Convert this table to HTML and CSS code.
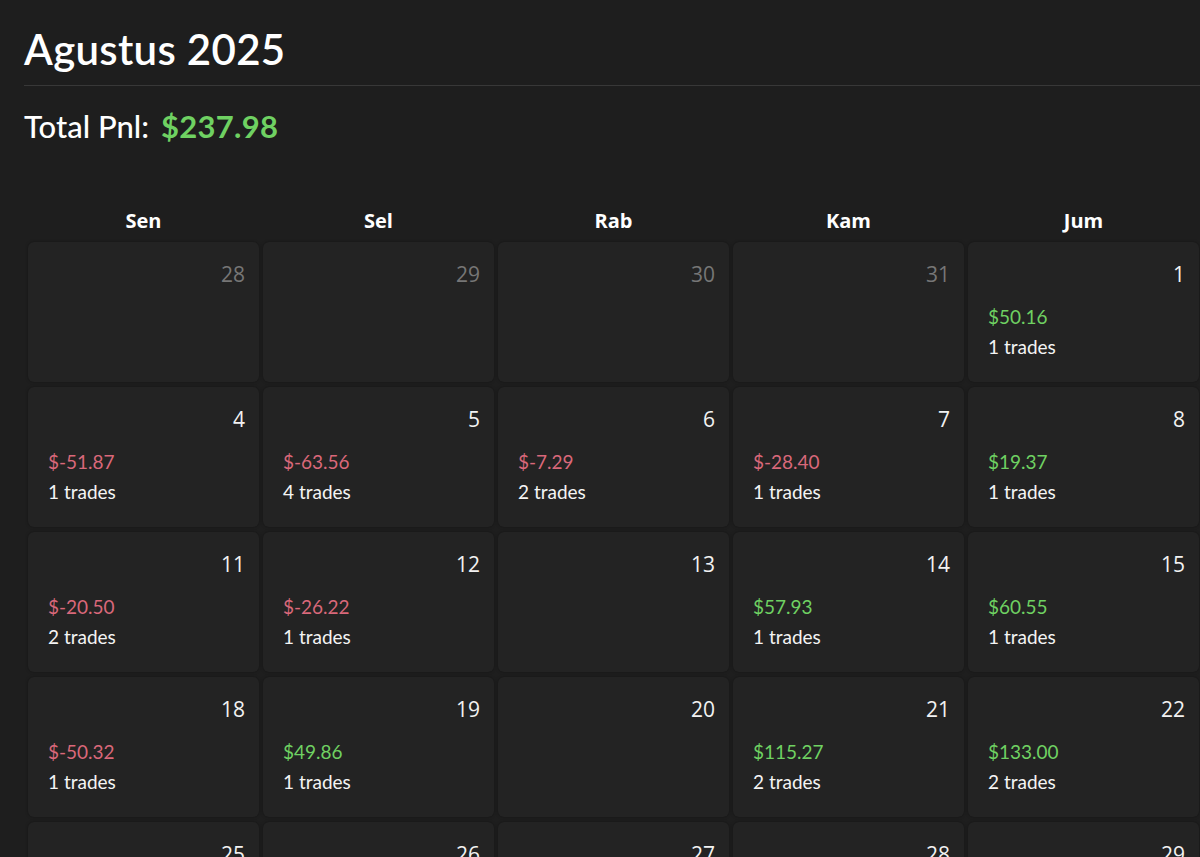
FILE: index.html
```html
<!DOCTYPE html>
<html lang="id">
<head>
<meta charset="utf-8">
<title>Agustus 2025</title>
<link rel="stylesheet" href="styles.css">
</head>
<body>
<div class="page">
  <h1 class="title">Agustus 2025</h1>
  <div class="total"><span class="label">Total Pnl:</span><span class="pos">$237.98</span></div>
  <div class="calendar">
    <div class="dow">Sen</div><div class="dow">Sel</div><div class="dow">Rab</div><div class="dow">Kam</div><div class="dow">Jum</div>

    <div class="cell muted"><div class="num">28</div></div>
    <div class="cell muted"><div class="num">29</div></div>
    <div class="cell muted"><div class="num">30</div></div>
    <div class="cell muted"><div class="num">31</div></div>
    <div class="cell"><div class="num">1</div><div class="pnl pos">$50.16</div><div class="trades">1 trades</div></div>

    <div class="cell"><div class="num">4</div><div class="pnl neg">$-51.87</div><div class="trades">1 trades</div></div>
    <div class="cell"><div class="num">5</div><div class="pnl neg">$-63.56</div><div class="trades">4 trades</div></div>
    <div class="cell"><div class="num">6</div><div class="pnl neg">$-7.29</div><div class="trades">2 trades</div></div>
    <div class="cell"><div class="num">7</div><div class="pnl neg">$-28.40</div><div class="trades">1 trades</div></div>
    <div class="cell"><div class="num">8</div><div class="pnl pos">$19.37</div><div class="trades">1 trades</div></div>

    <div class="cell"><div class="num">11</div><div class="pnl neg">$-20.50</div><div class="trades">2 trades</div></div>
    <div class="cell"><div class="num">12</div><div class="pnl neg">$-26.22</div><div class="trades">1 trades</div></div>
    <div class="cell"><div class="num">13</div></div>
    <div class="cell"><div class="num">14</div><div class="pnl pos">$57.93</div><div class="trades">1 trades</div></div>
    <div class="cell"><div class="num">15</div><div class="pnl pos">$60.55</div><div class="trades">1 trades</div></div>

    <div class="cell"><div class="num">18</div><div class="pnl neg">$-50.32</div><div class="trades">1 trades</div></div>
    <div class="cell"><div class="num">19</div><div class="pnl pos">$49.86</div><div class="trades">1 trades</div></div>
    <div class="cell"><div class="num">20</div></div>
    <div class="cell"><div class="num">21</div><div class="pnl pos">$115.27</div><div class="trades">2 trades</div></div>
    <div class="cell"><div class="num">22</div><div class="pnl pos">$133.00</div><div class="trades">2 trades</div></div>

    <div class="cell"><div class="num">25</div></div>
    <div class="cell"><div class="num">26</div></div>
    <div class="cell"><div class="num">27</div></div>
    <div class="cell"><div class="num">28</div></div>
    <div class="cell"><div class="num">29</div></div>
  </div>
</div>
</body>
</html>
```

FILE: styles.css
```css
html, body {
  margin: 0;
  padding: 0;
  background: #1e1e1e;
  overflow: hidden;
  height: 857px;
}
body {
  color: #ffffff;
  font-family: "Lato", "Noto Sans", sans-serif;
}
.page {
  padding: 23px 0 0 24px;
}
.title {
  margin: 0;
  font-size: 42px;
  font-weight: 600;
  line-height: 52px;
  padding-bottom: 10px;
  border-bottom: 1px solid #383838;
  letter-spacing: 0.3px;
}
.total {
  margin-top: 22px;
  font-size: 31px;
  line-height: 36px;
  font-weight: 500;
  display: flex;
  gap: 12px;
}
.pos { color: #6fd162; }
.neg { color: #d9687a; }
.total .pos { font-weight: 700; letter-spacing: 0.3px; }
.calendar {
  margin-top: 63px;
  margin-left: 4px;
  display: grid;
  grid-template-columns: repeat(5, 231px);
  grid-auto-rows: 140px;
  grid-template-rows: 30px;
  column-gap: 4px;
  row-gap: 5px;
}
.dow {
  font-family: "Open Sans", "Noto Sans", sans-serif;
  font-weight: 700;
  font-size: 20px;
  text-align: center;
  line-height: 28px;
  align-self: start;
}
.cell {
  background: #232323;
  border-radius: 6px;
  box-shadow: 0 0 3px rgba(0,0,0,0.35);
  padding: 17px 14px 0 20px;
  display: flex;
  flex-direction: column;
}
.num {
  font-family: "Open Sans", "Noto Sans", sans-serif;
  font-size: 21px;
  line-height: 30px;
  text-align: right;
  color: #f2f2f2;
}
.muted .num { color: #767676; }
.pnl {
  margin-top: 13px;
  font-size: 19px;
  line-height: 30px;
}
.trades {
  font-size: 19px;
  line-height: 30px;
  color: #f4f4f4;
}
```
